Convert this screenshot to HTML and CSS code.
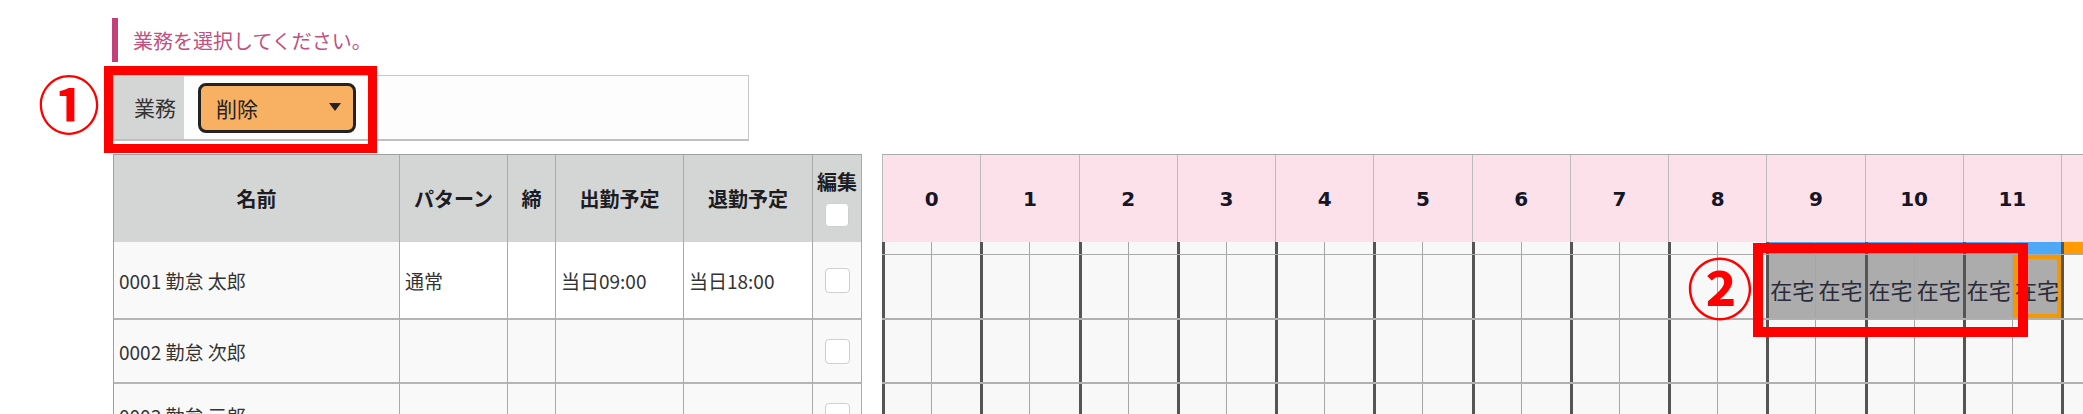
FILE: index.html
```html
<!DOCTYPE html>
<html lang="ja">
<head>
    <meta charset="UTF-8">
    <meta name="viewport" content="width=device-width, initial-scale=1.0">
    <title>勤務予定</title>
    <link rel="stylesheet" href="styles.css">
</head>
<body>
<div class="screen">

    <h2 class="guide">業務を選択してください。</h2>

    <div class="task-form">
        <div class="task-label">業務</div>
        <div class="task-field">
            <div class="select-wrap">
                <select class="task-select">
                    <option>削除</option>
                    <option>在宅</option>
                    <option>出社</option>
                </select>
            </div>
        </div>
    </div>

    <div class="schedule">
        <table class="staff-table">
            <colgroup>
                <col class="col-name">
                <col class="col-pattern">
                <col class="col-close">
                <col class="col-time">
                <col class="col-time2">
                <col class="col-edit">
            </colgroup>
            <thead>
                <tr class="head-row">
                    <th>名前</th>
                    <th>パターン</th>
                    <th>締</th>
                    <th>出勤予定</th>
                    <th>退勤予定</th>
                    <th class="edit-head">編集<input type="checkbox" class="check-box"></th>
                </tr>
            </thead>
            <tbody>
                <tr class="row-first">
                    <td>0001 勤怠 太郎</td>
                    <td class="filled">通常</td>
                    <td class="filled"></td>
                    <td class="filled">当日09:00</td>
                    <td class="filled">当日18:00</td>
                    <td class="check"><input type="checkbox" class="check-box"></td>
                </tr>
                <tr>
                    <td>0002 勤怠 次郎</td>
                    <td></td>
                    <td></td>
                    <td></td>
                    <td></td>
                    <td class="check"><input type="checkbox" class="check-box"></td>
                </tr>
                <tr>
                    <td>0003 勤怠 三郎</td>
                    <td></td>
                    <td></td>
                    <td></td>
                    <td></td>
                    <td class="check"><input type="checkbox" class="check-box"></td>
                </tr>
            </tbody>
        </table>

        <div class="gantt">
            <div class="g-inner" id="gantt"></div>
        </div>
    </div>

    <span class="mark mark-1">①</span>
    <div class="callout callout-1"></div>
    <span class="mark mark-2">②</span>
    <div class="callout callout-2"></div>

</div>

<script>
    // half-hour slots, 48 per day
    const SLOTS = 48;

    const rows = [
        {
            strip: { 18: 'home', 19: 'home', 20: 'home', 21: 'home', 22: 'home', 23: 'home',
                     24: 'next', 25: 'next', 26: 'next', 27: 'next', 28: 'next', 29: 'next' },
            slots: { 18: '在宅', 19: '在宅', 20: '在宅', 21: '在宅', 22: '在宅', 23: '在宅' },
            current: 23
        },
        { slots: {} },
        { slots: {} }
    ];

    function slotClass(i) {
        return i % 2 === 0 ? 'g-slot hour' : 'g-slot';
    }

    let html = '<div class="g-head">';
    for (let h = 0; h < SLOTS / 2; h++) {
        html += '<div class="g-hour">' + h + '</div>';
    }
    html += '</div>';

    rows.forEach(function (row) {
        html += '<div class="g-row">';

        if (row.strip) {
            html += '<div class="g-track g-strip">';
            for (let i = 0; i < SLOTS; i++) {
                const kind = row.strip[i] ? ' bar-' + row.strip[i] : '';
                html += '<div class="' + slotClass(i) + kind + '"></div>';
            }
            html += '</div>';
        }

        html += '<div class="g-track g-main' + (row.strip ? ' tall' : '') + '">';
        for (let i = 0; i < SLOTS; i++) {
            const label = row.slots[i];
            let cls = slotClass(i);
            if (label) cls += ' busy';
            if (row.current === i) cls += ' current';
            html += '<div class="' + cls + '">' + (label || '') + '</div>';
        }
        html += '</div></div>';
    });

    document.getElementById('gantt').innerHTML = html;
</script>
</body>
</html>
```

FILE: styles.css
```css
body {
    margin: 0;
    font-family: "Noto Sans CJK JP", sans-serif;
    color: #333;
    background-color: #fff;
    overflow: hidden;
}

.screen {
    position: relative;
    padding-top: 18px;
}

/* guide line */
.guide {
    margin: 0 0 0 112px;
    height: 44px;
    padding-left: 15px;
    border-left: 6px solid #c3417a;
    font-size: 20px;
    font-weight: normal;
    line-height: 46px;
    color: #c4507f;
}

/* task select */
.task-form {
    display: flex;
    width: 636px;
    height: 66px;
    margin: 13px 0 0 113px;
    box-sizing: border-box;
    border: 1px solid #c8c8c8;
    border-bottom: 2px solid #c0c0c0;
    background-color: #fdfdfd;
}
.task-label {
    width: 70px;
    padding-left: 20px;
    box-sizing: border-box;
    background-color: #d4d5d5;
    font-size: 21px;
    line-height: 63px;
    color: #333;
}
.task-field {
    padding: 7px 0 0 14px;
}
.select-wrap {
    position: relative;
    width: 158px;
}
.select-wrap::after {
    content: "";
    position: absolute;
    right: 15px;
    top: 20px;
    border-left: 6px solid transparent;
    border-right: 6px solid transparent;
    border-top: 8px solid #222;
    pointer-events: none;
}
.task-select {
    appearance: none;
    -webkit-appearance: none;
    width: 158px;
    height: 50px;
    padding: 0 0 0 15px;
    border: 3px solid #222;
    border-radius: 8px;
    background-color: #f8b062;
    font-family: inherit;
    font-size: 21px;
    color: #222;
}

/* schedule */
.schedule {
    display: flex;
    align-items: flex-start;
    gap: 20px;
    margin: 13px 0 0 113px;
}

.staff-table {
    flex: none;
    width: 749px;
    table-layout: fixed;
    border-collapse: separate;
    border-spacing: 0;
    border-top: 1px solid #a0a0a0;
    border-left: 1px solid #a0a0a0;
    font-size: 19px;
}
.col-name { width: 286px; }
.col-pattern { width: 108px; }
.col-close { width: 48px; }
.col-time { width: 128px; }
.col-time2 { width: 129px; }
.col-edit { width: 49px; }

.staff-table th,
.staff-table td {
    padding: 0 0 0 5px;
    border-right: 1px solid #aaa;
    text-align: left;
    white-space: nowrap;
    overflow: hidden;
}
.staff-table th {
    background-color: #d4d5d5;
    font-size: 20px;
    font-weight: bold;
    color: #1c1c24;
    text-align: center;
    padding: 0;
}
.staff-table td {
    background-color: #f9f9f9;
    border-bottom: 2px solid #b4b4b4;
    color: #333;
}
.staff-table td.filled {
    background-color: #fff;
}
.staff-table td.check {
    padding: 0;
    text-align: center;
}
.head-row {
    height: 87px;
}
.staff-table tbody tr {
    height: 64px;
}
.staff-table tbody tr.row-first {
    height: 78px;
}
.edit-head {
    font-size: 19px;
    line-height: 24px;
}
.check-box {
    appearance: none;
    -webkit-appearance: none;
    display: block;
    width: 25px;
    height: 25px;
    margin: 0 auto;
    border: 1px solid #cfcfcf;
    border-radius: 4px;
    background-color: #fff;
}
.edit-head .check-box {
    width: 24px;
    height: 24px;
    margin-top: 9px;
}

/* gantt */
.gantt {
    flex: 1;
    min-width: 0;
    overflow: hidden;
}
.g-inner {
    width: 2358px;
}
.g-head {
    display: flex;
    height: 88px;
    box-sizing: border-box;
    border-top: 1px solid #aaa;
}
.g-hour {
    flex: 0 0 98.25px;
    box-sizing: border-box;
    border-left: 1px solid #bbb;
    background-color: #fce0ea;
    display: flex;
    align-items: center;
    justify-content: center;
    font-family: "DejaVu Sans", "Noto Sans CJK JP", sans-serif;
    font-size: 20px;
    font-weight: bold;
    color: #151525;
}
.g-row {
    background-color: #f8f8f8;
    border-bottom: 2px solid #b0b0b0;
}
.g-track {
    display: flex;
}
.g-strip {
    height: 13px;
    box-sizing: border-box;
    border-bottom: 1px solid #aaa;
}
.g-main {
    height: 62px;
}
.g-main.tall {
    height: 63px;
}
.g-slot {
    flex: 0 0 49.125px;
    box-sizing: border-box;
    border-left: 1px solid #a5a5a5;
}
.g-slot.hour {
    border-left: 3px solid #555;
}
.g-strip .bar-home {
    background-color: #4fa8f5;
}
.g-strip .bar-next {
    background-color: #ff9a00;
}
.g-slot.busy {
    background-color: #acacac;
    padding-top: 6px;
    font-size: 22px;
    line-height: 57px;
    text-align: center;
    white-space: nowrap;
    overflow: hidden;
    color: #2a2a3a;
}
.g-slot.current {
    box-shadow: inset 0 0 0 4px #f39800;
}

/* annotations */
.mark {
    position: absolute;
    font-family: "Noto Sans CJK JP", sans-serif;
    font-size: 62px;
    font-weight: bold;
    line-height: 1;
    color: #f00;
}
.mark-1 {
    left: 38px;
    top: 71px;
}
.mark-2 {
    left: 1687px;
    top: 252px;
    font-size: 66px;
}
.callout {
    position: absolute;
    box-sizing: border-box;
    border: 10px solid #f00;
}
.callout-1 {
    left: 104px;
    top: 66px;
    width: 273px;
    height: 87px;
    border-width: 9px;
}
.callout-2 {
    left: 1753px;
    top: 243px;
    width: 275px;
    height: 94px;
}
```
